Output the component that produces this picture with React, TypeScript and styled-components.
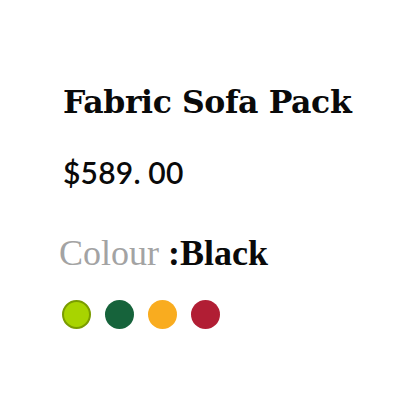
import React from 'react';
import styled, { createGlobalStyle } from 'styled-components';

const GlobalStyle = createGlobalStyle`
	html, body {
		margin: 0;
		padding: 0;
		background: #ffffff;
	}
`;

const Panel = styled.div`
	width: 411px;
	height: 412px;
	box-sizing: border-box;
	padding: 82px 0 0 63px;
	display: flex;
	flex-direction: column;
`;

const Title = styled.h2`
	margin: 0;
	font-family: 'DejaVu Serif', Georgia, serif;
	font-weight: 700;
	font-size: 31.5px;
	line-height: 40px;
	color: #0a0a0a;
	letter-spacing: -0.4px;
`;

const Price = styled.div`
	margin-top: 34px;
	font-family: 'Lato', 'Open Sans', sans-serif;
	font-size: 30px;
	line-height: 32px;
	font-weight: 600;
	color: #0a0a0a;
	letter-spacing: 0.2px;
`;

const ColourRow = styled.div`
	margin: 45px 0 0 -4px;
	font-family: 'Liberation Serif', Georgia, serif;
	font-size: 36px;
	line-height: 40px;
`;

const Label = styled.span`
	color: #a3a3a3;
`;

const Value = styled.span`
	color: #0a0a0a;
	font-weight: 700;
`;

const Swatches = styled.div`
	display: flex;
	gap: 14px;
	margin-top: 27px;
	margin-left: -1px;
`;

const Swatch = styled.span<{ $color: string; $ring?: string }>`
	width: 29px;
	height: 29px;
	border-radius: 50%;
	box-sizing: border-box;
	background: ${(p) => p.$color};
	border: ${(p) => (p.$ring ? `2px solid ${p.$ring}` : 'none')};
`;

const colours = [
	{ color: '#a8d400', ring: '#7a9c00' },
	{ color: '#16633b' },
	{ color: '#f9ac1f' },
	{ color: '#b11e34' }
];

const App = () => {
	return (
		<>
			<GlobalStyle />
			<Panel>
				<Title>Fabric Sofa Pack</Title>
				<Price>$589. 00</Price>
				<ColourRow>
					<Label>Colour </Label>
					<Value>:Black</Value>
				</ColourRow>
				<Swatches>
					{colours.map((c) => (
						<Swatch key={c.color} $color={c.color} $ring={c.ring} />
					))}
				</Swatches>
			</Panel>
		</>
	);
};

export default App;
